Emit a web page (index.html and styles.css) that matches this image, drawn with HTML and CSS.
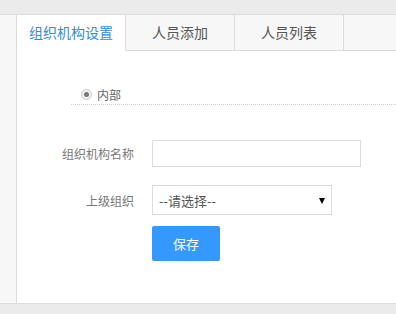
FILE: index.html
```html
<!DOCTYPE html>
<html lang="zh-CN">
<head>
<meta charset="utf-8">
<title>组织机构设置</title>
<link rel="stylesheet" href="styles.css">
</head>
<body>
<div class="topband"></div>
<div class="main">
  <div class="sidebar"></div>
  <div class="panel">
    <div class="tabs">
      <div class="tab active">组织机构设置</div>
      <div class="tab">人员添加</div>
      <div class="tab">人员列表</div>
    </div>
    <div class="content">
      <div class="radio-row">
        <span class="radio"><span class="dot"></span></span>
        <span class="radio-label">内部</span>
      </div>
      <div class="form-row row-name">
        <label class="label">组织机构名称</label>
        <input class="input" type="text">
      </div>
      <div class="form-row row-parent">
        <label class="label">上级组织</label>
        <div class="select-wrap">
          <span class="select-text">--请选择--</span>
          <span class="arrow"></span>
        </div>
      </div>
      <div class="form-row row-btn">
        <span class="label"></span>
        <button class="btn" type="button">保存</button>
      </div>
    </div>
  </div>
</div>
<div class="bottomband"></div>
</body>
</html>
```
FILE: styles.css
```css
html, body {
  margin: 0;
  padding: 0;
}
body {
  width: 396px;
  height: 314px;
  overflow: hidden;
  background: #ebebeb;
  font-family: "Noto Sans CJK SC", "Noto Sans", sans-serif;
  display: flex;
  flex-direction: column;
}
.topband {
  height: 14px;
  background: #ebebeb;
  border-bottom: 1px solid #dcdcdc;
  flex: none;
}
.main {
  height: 288px;
  display: flex;
  flex: none;
}
.sidebar {
  width: 16px;
  background: #f7f7f7;
  border-right: 1px solid #dcdcdc;
  flex: none;
}
.panel {
  flex: 1;
  background: #fff;
  display: flex;
  flex-direction: column;
}
.bottomband {
  border-top: 1px solid #dcdcdc;
  flex: 1;
  background: #ebebeb;
}
.tabs {
  display: flex;
  height: 35px;
  background: #f7f7f7;
  border-bottom: 1px solid #dcdcdc;
}
.tab {
  width: 108px;
  border-right: 1px solid #dcdcdc;
  text-align: center;
  font-size: 14px;
  line-height: 35px;
  color: #555;
}
.tab.active {
  background: #fff;
  color: #2b8fdb;
  height: 36px;
}
.content {
  display: flex;
  flex-direction: column;
}
.radio-row {
  margin-top: 33px;
  margin-left: 54px;
  height: 20px;
  border-bottom: 1px dotted #cfcfcf;
  display: flex;
  align-items: center;
  padding-left: 10px;
}
.radio {
  width: 9px;
  height: 9px;
  border: 1px solid #c8c8c8;
  border-radius: 50%;
  background: #f2f2f2;
  display: flex;
  align-items: center;
  justify-content: center;
}
.dot {
  width: 5px;
  height: 5px;
  border-radius: 50%;
  background: #777;
}
.radio-label {
  margin-left: 5px;
  font-size: 12px;
  color: #666;
}
.form-row {
  display: flex;
  align-items: center;
}
.label {
  width: 117px;
  margin-right: 18px;
  text-align: right;
  font-size: 12px;
  color: #777;
  flex: none;
}
.row-name {
  margin-top: 35px;
}
.input {
  width: 207px;
  height: 25px;
  border: 1px solid #dcdcdc;
  padding: 0;
  margin: 0;
  box-sizing: content-box;
  background: #fff;
}
.row-parent {
  margin-top: 18px;
}
.select-wrap {
  position: relative;
  width: 178px;
  height: 28px;
  border: 1px solid #dcdcdc;
  display: flex;
  align-items: center;
}
.select-text {
  padding-left: 6px;
  font-size: 13px;
  color: #555;
}
.arrow {
  position: absolute;
  right: 6px;
  top: 12px;
  width: 0;
  height: 0;
  border-left: 3px solid transparent;
  border-right: 3px solid transparent;
  border-top: 6px solid #000;
}
.row-btn {
  margin-top: 11px;
}
.btn {
  width: 68px;
  height: 35px;
  border: none;
  border-radius: 2px;
  background: #3399ff;
  color: #fff;
  font-family: "Noto Sans CJK SC", "Noto Sans", sans-serif;
  font-size: 13px;
  padding: 0;
  margin: 0;
}
```
